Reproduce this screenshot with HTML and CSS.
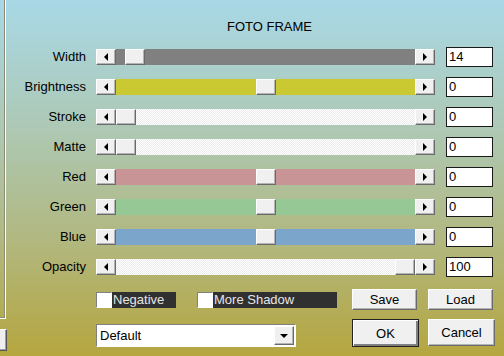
FILE: index.html
```html
<!DOCTYPE html>
<html lang="en">
<head>
    <meta charset="UTF-8">
    <title>Foto Frame</title>
    <link rel="stylesheet" href="styles.css">
</head>
<body>
    <div class="window">
        <div class="side">
            <div class="groupbox"></div>
            <div class="side-btn"></div>
        </div>

        <div class="main">
            <div class="title">FOTO FRAME</div>

            <div class="sliders">
                <div class="label">Width</div>
                <div class="scrollbar">
                    <div class="arrow arrow-left"></div>
                    <div class="track track-gray"><div class="thumb" style="margin-left: 9px"></div></div>
                    <div class="arrow arrow-right"></div>
                </div>
                <div class="field">14</div>

                <div class="label">Brightness</div>
                <div class="scrollbar">
                    <div class="arrow arrow-left"></div>
                    <div class="track track-yellow"><div class="thumb" style="margin-left: 140px"></div></div>
                    <div class="arrow arrow-right"></div>
                </div>
                <div class="field">0</div>

                <div class="label">Stroke</div>
                <div class="scrollbar">
                    <div class="arrow arrow-left"></div>
                    <div class="track track-plain"><div class="thumb" style="margin-left: 0px"></div></div>
                    <div class="arrow arrow-right"></div>
                </div>
                <div class="field">0</div>

                <div class="label">Matte</div>
                <div class="scrollbar">
                    <div class="arrow arrow-left"></div>
                    <div class="track track-plain"><div class="thumb" style="margin-left: 0px"></div></div>
                    <div class="arrow arrow-right"></div>
                </div>
                <div class="field">0</div>

                <div class="label">Red</div>
                <div class="scrollbar">
                    <div class="arrow arrow-left"></div>
                    <div class="track track-red"><div class="thumb" style="margin-left: 140px"></div></div>
                    <div class="arrow arrow-right"></div>
                </div>
                <div class="field">0</div>

                <div class="label">Green</div>
                <div class="scrollbar">
                    <div class="arrow arrow-left"></div>
                    <div class="track track-green"><div class="thumb" style="margin-left: 140px"></div></div>
                    <div class="arrow arrow-right"></div>
                </div>
                <div class="field">0</div>

                <div class="label">Blue</div>
                <div class="scrollbar">
                    <div class="arrow arrow-left"></div>
                    <div class="track track-blue"><div class="thumb" style="margin-left: 140px"></div></div>
                    <div class="arrow arrow-right"></div>
                </div>
                <div class="field">0</div>

                <div class="label">Opacity</div>
                <div class="scrollbar">
                    <div class="arrow arrow-left"></div>
                    <div class="track track-plain"><div class="thumb" style="margin-left: 279px"></div></div>
                    <div class="arrow arrow-right"></div>
                </div>
                <div class="field">100</div>
            </div>

            <div class="bottom">
                <div class="checks">
                    <div class="check">
                        <span class="box"></span>
                        <span class="check-label check-negative">Negative</span>
                    </div>
                    <div class="check">
                        <span class="box"></span>
                        <span class="check-label check-shadow">More Shadow</span>
                    </div>
                </div>
                <div class="btn btn-small">Save</div>
                <div class="btn btn-small">Load</div>

                <div class="select">
                    <span class="select-text">Default</span>
                    <span class="select-btn"></span>
                </div>
                <div class="btn btn-big btn-default">OK</div>
                <div class="btn btn-big btn-cancel">Cancel</div>
            </div>
        </div>
    </div>
</body>
</html>
```

FILE: styles.css
```css
* {
    margin: 0;
    padding: 0;
    box-sizing: border-box;
}

body {
    width: 504px;
    height: 356px;
    overflow: hidden;
    font-family: 'Liberation Sans', Arial, sans-serif;
    font-size: 13px;
    color: #000;
    background: linear-gradient(to bottom, #a8d8e6 0%, #adc9b6 35%, #b1b984 65%, #b5a63f 100%);
}

.window {
    display: flex;
    height: 356px;
}

/* left edge of the neighbouring panel */
.side {
    width: 8px;
    display: flex;
    flex-direction: column;
}

.groupbox {
    width: 6px;
    height: 319px;
    border-right: 1px solid #fff;
    border-bottom: 1px solid #fff;
    box-shadow: inset -1px -1px 0 #8c8c78;
}

.side-btn {
    width: 7px;
    height: 22px;
    margin-top: 10px;
    background: #efefef;
    border-top: 1px solid #fff;
    border-right: 1px solid #555;
    border-bottom: 1px solid #555;
    box-shadow: inset -1px -1px 0 #a0a0a0;
}

.main {
    flex: 1;
}

.title {
    margin-top: 19px;
    padding-left: 219px;
    line-height: 16px;
}

.sliders {
    margin-top: 12px;
    display: grid;
    grid-template-columns: 78px 339px 48px;
    grid-auto-rows: 20px;
    column-gap: 10px;
    row-gap: 10px;
    align-items: center;
}

.label {
    text-align: right;
    line-height: 20px;
}

.scrollbar {
    display: flex;
    height: 16px;
}

.arrow,
.thumb,
.btn,
.select-btn {
    background: #f0f0f0;
    border: 1px solid;
    border-color: #fff #6a6a6a #6a6a6a #fff;
    box-shadow: inset -1px -1px 0 #b4b4b4;
}

.arrow {
    width: 20px;
    height: 16px;
    display: flex;
    align-items: center;
    justify-content: center;
}

.arrow::after {
    content: '';
    width: 0;
    height: 0;
    border-top: 4px solid transparent;
    border-bottom: 4px solid transparent;
}

.arrow-left::after {
    border-right: 4px solid #000;
}

.arrow-right::after {
    border-left: 4px solid #000;
}

.track {
    flex: 1;
    display: flex;
}

.thumb {
    width: 20px;
    height: 16px;
}

.track-gray { background: #808080; }
.track-yellow { background: #cbc932; }
.track-red { background: #c99496; }
.track-green { background: #95c895; }
.track-blue { background: #7ca5cb; }

.track-plain {
    background: repeating-conic-gradient(#fff 0 25%, #ebebeb 0 50%) 0 0 / 2px 2px;
}

.field {
    justify-self: end;
    width: 47px;
    height: 20px;
    background: #fff;
    border: 1px solid #1a1a1a;
    padding-left: 2px;
    line-height: 18px;
}

.bottom {
    margin-top: 12px;
    padding-left: 88px;
    display: grid;
    grid-template-columns: 256px 76px 67px;
    grid-template-rows: 21px 28px;
    row-gap: 9px;
}

.checks {
    display: flex;
    align-items: center;
    gap: 21px;
}

.check {
    display: flex;
}

.box {
    width: 16px;
    height: 16px;
    background: #fff;
    border: 1px solid;
    border-color: #808080 #fff #fff #808080;
}

.check-label {
    height: 16px;
    line-height: 16px;
    padding-left: 1px;
    background: #303030;
    color: #e6e6e6;
}

.check-negative { width: 64px; }
.check-shadow { width: 124px; }

.btn {
    display: flex;
    align-items: center;
    justify-content: center;
}

.btn-small {
    width: 65px;
    height: 21px;
}

.btn-big {
    width: 67px;
    height: 28px;
}

.btn-default {
    border: 1px solid #222;
    box-shadow: inset 1px 1px 0 #fff, inset -2px -2px 0 #808080;
}

.btn-cancel {
    height: 27px;
}

.select {
    align-self: end;
    width: 200px;
    height: 23px;
    display: flex;
    align-items: center;
    background: #fff;
    border: 1px solid;
    border-color: #808080 #fff #fff #808080;
}

.select-text {
    flex: 1;
    padding-left: 3px;
}

.select-btn {
    width: 20px;
    height: 19px;
    margin-right: 1px;
    display: flex;
    align-items: center;
    justify-content: center;
}

.select-btn::after {
    content: '';
    width: 0;
    height: 0;
    border-left: 4px solid transparent;
    border-right: 4px solid transparent;
    border-top: 4px solid #000;
}
```
